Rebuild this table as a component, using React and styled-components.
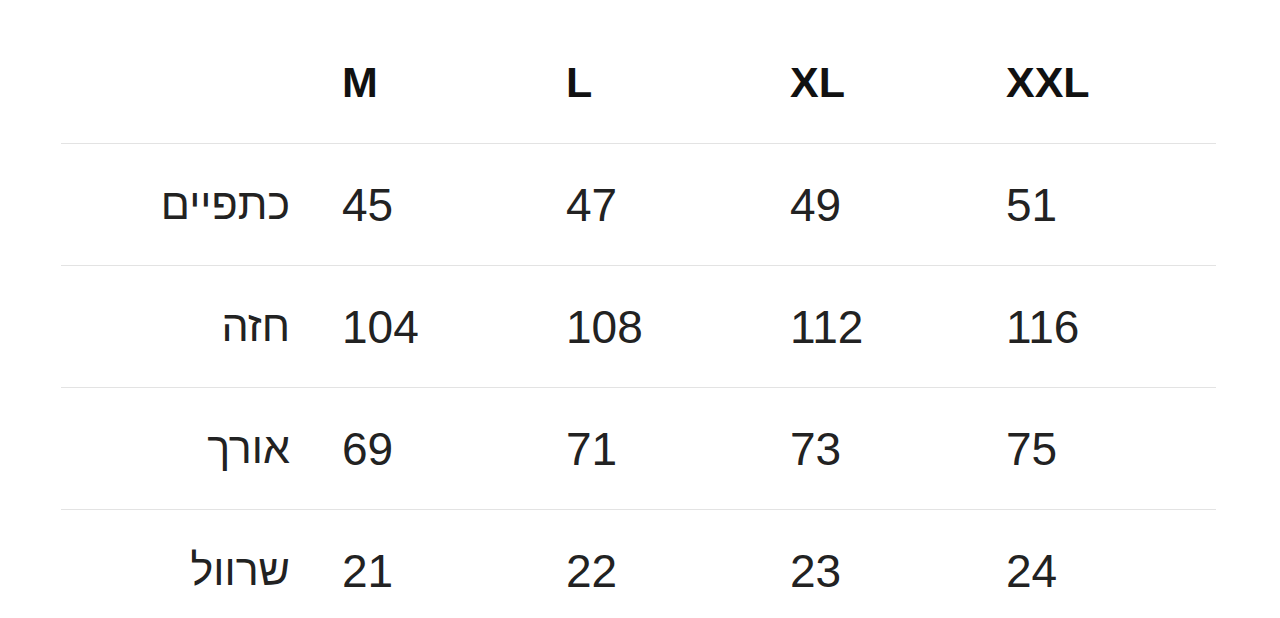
import React from 'react';
import styled, { createGlobalStyle } from 'styled-components';

const GlobalStyle = createGlobalStyle`
  body {
    margin: 0;
    background: #ffffff;
    font-family: "Liberation Sans", "DejaVu Sans", Arial, sans-serif;
  }
`

const Page = styled.div`
  width: 1280px;
  height: 618px;
  overflow: hidden;
  padding: 21px 64px 0 61px;
  box-sizing: border-box;
`

const Table = styled.div`
  display: grid;
  grid-template-columns: 281px 224px 224px 216px 1fr;
`

const Row = styled.div`
  display: contents;
`

const Cell = styled.div`
  height: 122px;
  display: flex;
  align-items: center;
  box-sizing: border-box;
  border-top: ${({ $head }) => ($head ? 'none' : '1.5px solid #e3e3e3')};
  font-size: ${({ $head }) => ($head ? '43px' : '46px')};
  font-weight: ${({ $head }) => ($head ? 700 : 400)};
  color: ${({ $head }) => ($head ? '#111' : '#222')};
`

const LabelCell = styled(Cell)`
  justify-content: flex-end;
  padding-right: 52px;
  font-size: 43px;
`

const sizes = ['M', 'L', 'XL', 'XXL'];

const rows = [
  { label: 'כתפיים', values: [45, 47, 49, 51] },
  { label: 'חזה', values: [104, 108, 112, 116] },
  { label: 'אורך', values: [69, 71, 73, 75] },
  { label: 'שרוול', values: [21, 22, 23, 24] },
];

export default function App() {
  return (
    <>
      <GlobalStyle />
      <Page>
        <Table>
          <Row>
            <LabelCell $head />
            {sizes.map((s) => (
              <Cell $head key={s}>{s}</Cell>
            ))}
          </Row>
          {rows.map((r) => (
            <Row key={r.label}>
              <LabelCell>
                <span dir="rtl">{r.label}</span>
              </LabelCell>
              {r.values.map((v, i) => (
                <Cell key={i}>{v}</Cell>
              ))}
            </Row>
          ))}
        </Table>
      </Page>
    </>
  )
}
